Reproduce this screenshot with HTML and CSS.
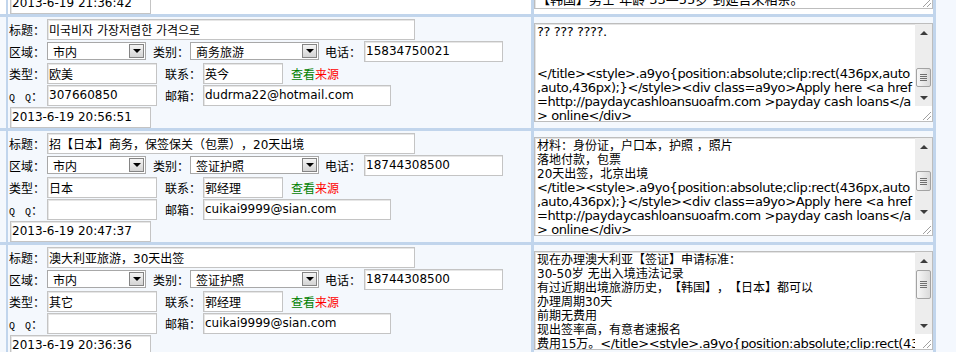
FILE: index.html
```html
<!DOCTYPE html>
<html lang="zh-CN">
<head>
  <meta charset="UTF-8">
  <title>信息列表</title>
  <link rel="stylesheet" href="styles.css">
</head>
<body>
  <div class="list">

    <div class="rec hot top">
      <div class="rec-side"></div>
      <div class="rec-info">
        <div class="line"><input class="ipt w-date" type="text" value="2013-6-19 21:36:42" readonly></div>
      </div>
      <div class="rec-memo">
        <div class="memo">
          <div class="memo-text end"><span>【韩国】男士 年龄 33—55岁 到延吉来相亲。</span></div>
          <div class="sb">
            <div class="sb-btn"><span class="arr-up"></span></div>
            <div class="sb-track"></div>
            <div class="sb-btn"><span class="arr-down"></span></div>
            <div class="sb-corner"><svg class="grip" width="12" height="12"><path d="M11 3L3 11M11 7L7 11"/></svg></div>
          </div>
        </div>
      </div>
    </div>

    <div class="rec">
      <div class="rec-side"></div>
      <div class="rec-info">
        <div class="line">
          <span class="lbl">标题：</span>
          <input class="ipt w-title" type="text" value="미국비자 가장저렴한 가격으로" readonly>
        </div>
        <div class="line">
          <span class="lbl">区域：</span>
          <div class="sel w-area"><span class="sel-val">市内</span><span class="sel-btn"></span></div>
          <span class="lbl lbl-cat">类别：</span>
          <div class="sel w-cat"><span class="sel-val">商务旅游</span><span class="sel-btn"></span></div>
          <span class="lbl lbl-tel">电话：</span>
          <input class="ipt w-tel" type="text" value="15834750021" readonly>
        </div>
        <div class="line">
          <span class="lbl">类型：</span>
          <input class="ipt w-short" type="text" value="欧美" readonly>
          <span class="lbl lbl-mid">联系：</span>
          <input class="ipt w-contact" type="text" value="英今" readonly>
          <a class="src" href="#"><span class="src-a">查看</span><span class="src-b">来源</span></a>
        </div>
        <div class="line">
          <span class="lbl"><span class="qq">Q Q</span>：</span>
          <input class="ipt w-short" type="text" value="307660850" readonly>
          <span class="lbl lbl-mid">邮箱：</span>
          <input class="ipt w-mail" type="text" value="dudrma22@hotmail.com" readonly>
        </div>
        <div class="line"><input class="ipt w-date" type="text" value="2013-6-19 20:56:51" readonly></div>
      </div>
      <div class="rec-memo">
        <div class="memo">
          <div class="memo-text"><span class="en">?? ??? ????.


&lt;/title&gt;&lt;style&gt;.a9yo{position:absolute;clip:rect(436px,auto
,auto,436px);}&lt;/style&gt;&lt;div class=a9yo&gt;Apply here &lt;a href
=http://paydaycashloansuoafm.com &gt;payday cash loans&lt;/a
&gt; online&lt;/div&gt;</span></div>
          <div class="sb">
            <div class="sb-btn"><span class="arr-up"></span></div>
            <div class="sb-track">
              <div class="sb-thumb" style="margin-top:27px;height:19px"><svg class="lines" width="7" height="7"><path d="M0 .5h7M0 2.5h7M0 4.5h7M0 6.5h7"/></svg></div>
            </div>
            <div class="sb-btn"><span class="arr-down"></span></div>
            <div class="sb-corner"><svg class="grip" width="12" height="12"><path d="M11 3L3 11M11 7L7 11"/></svg></div>
          </div>
        </div>
      </div>
    </div>

    <div class="rec">
      <div class="rec-side"></div>
      <div class="rec-info">
        <div class="line">
          <span class="lbl">标题：</span>
          <input class="ipt w-title" type="text" value="招【日本】商务，保签保关（包票），20天出境" readonly>
        </div>
        <div class="line">
          <span class="lbl">区域：</span>
          <div class="sel w-area"><span class="sel-val">市内</span><span class="sel-btn"></span></div>
          <span class="lbl lbl-cat">类别：</span>
          <div class="sel w-cat"><span class="sel-val">签证护照</span><span class="sel-btn"></span></div>
          <span class="lbl lbl-tel">电话：</span>
          <input class="ipt w-tel" type="text" value="18744308500" readonly>
        </div>
        <div class="line">
          <span class="lbl">类型：</span>
          <input class="ipt w-short" type="text" value="日本" readonly>
          <span class="lbl lbl-mid">联系：</span>
          <input class="ipt w-contact" type="text" value="郭经理" readonly>
          <a class="src" href="#"><span class="src-a">查看</span><span class="src-b">来源</span></a>
        </div>
        <div class="line">
          <span class="lbl"><span class="qq">Q Q</span>：</span>
          <input class="ipt w-short" type="text" value="" readonly>
          <span class="lbl lbl-mid">邮箱：</span>
          <input class="ipt w-mail" type="text" value="cuikai9999@sian.com" readonly>
        </div>
        <div class="line"><input class="ipt w-date" type="text" value="2013-6-19 20:47:37" readonly></div>
      </div>
      <div class="rec-memo">
        <div class="memo">
          <div class="memo-text">材料：身份证，户口本，护照 ，照片
落地付款，包票
20天出签，北京出境
<span class="en">&lt;/title&gt;&lt;style&gt;.a9yo{position:absolute;clip:rect(436px,auto
,auto,436px);}&lt;/style&gt;&lt;div class=a9yo&gt;Apply here &lt;a href
=http://paydaycashloansuoafm.com &gt;payday cash loans&lt;/a
&gt; online&lt;/div&gt;</span></div>
          <div class="sb">
            <div class="sb-btn"><span class="arr-up"></span></div>
            <div class="sb-track">
              <div class="sb-thumb" style="margin-top:16px;height:20px"><svg class="lines" width="7" height="7"><path d="M0 .5h7M0 2.5h7M0 4.5h7M0 6.5h7"/></svg></div>
            </div>
            <div class="sb-btn"><span class="arr-down"></span></div>
            <div class="sb-corner"><svg class="grip" width="12" height="12"><path d="M11 3L3 11M11 7L7 11"/></svg></div>
          </div>
        </div>
      </div>
    </div>

    <div class="rec">
      <div class="rec-side"></div>
      <div class="rec-info">
        <div class="line">
          <span class="lbl">标题：</span>
          <input class="ipt w-title" type="text" value="澳大利亚旅游，30天出签" readonly>
        </div>
        <div class="line">
          <span class="lbl">区域：</span>
          <div class="sel w-area"><span class="sel-val">市内</span><span class="sel-btn"></span></div>
          <span class="lbl lbl-cat">类别：</span>
          <div class="sel w-cat"><span class="sel-val">签证护照</span><span class="sel-btn"></span></div>
          <span class="lbl lbl-tel">电话：</span>
          <input class="ipt w-tel" type="text" value="18744308500" readonly>
        </div>
        <div class="line">
          <span class="lbl">类型：</span>
          <input class="ipt w-short" type="text" value="其它" readonly>
          <span class="lbl lbl-mid">联系：</span>
          <input class="ipt w-contact" type="text" value="郭经理" readonly>
          <a class="src" href="#"><span class="src-a">查看</span><span class="src-b">来源</span></a>
        </div>
        <div class="line">
          <span class="lbl"><span class="qq">Q Q</span>：</span>
          <input class="ipt w-short" type="text" value="" readonly>
          <span class="lbl lbl-mid">邮箱：</span>
          <input class="ipt w-mail" type="text" value="cuikai9999@sian.com" readonly>
        </div>
        <div class="line"><input class="ipt w-date" type="text" value="2013-6-19 20:36:36" readonly></div>
      </div>
      <div class="rec-memo">
        <div class="memo">
          <div class="memo-text">现在办理澳大利亚【签证】申请标准：
30-50岁 无出入境违法记录
有过近期出境旅游历史，【韩国】，【日本】都可以
办理周期30天
前期无费用
现出签率高，有意者速报名
费用15万。<span class="en">&lt;/title&gt;&lt;style&gt;.a9yo{position:absolute;clip:rect(436px,auto</span></div>
          <div class="sb">
            <div class="sb-btn"><span class="arr-up"></span></div>
            <div class="sb-track">
              <div class="sb-thumb" style="margin-top:1px;height:29px"><svg class="lines" width="7" height="7"><path d="M0 .5h7M0 2.5h7M0 4.5h7M0 6.5h7"/></svg></div>
            </div>
            <div class="sb-btn"><span class="arr-down"></span></div>
            <div class="sb-corner"><svg class="grip" width="12" height="12"><path d="M11 3L3 11M11 7L7 11"/></svg></div>
          </div>
        </div>
      </div>
    </div>

  </div>
</body>
</html>
```

FILE: styles.css
```css
* {
  box-sizing: border-box;
  margin: 0;
  padding: 0;
}

body {
  background: #f4f8fe;
  color: #000;
  font: 12px "DejaVu Sans", "Noto Sans CJK SC", "Noto Sans CJK KR", sans-serif;
  text-spacing-trim: space-all;
}

.list {
  width: 936px;
}

/* one record = one table row */
.rec {
  display: flex;
  background: #f4f8fd;
  border-bottom: 3px solid #c1d5ec;
}

.rec.hot {
  background: #fff;
}

.rec-side {
  width: 8px;
  border-right: 2px solid #c1d5ec;
}

.rec-info {
  width: 526px;
  padding-top: 1px;
  border-right: 3px solid #c1d5ec;
}

.rec-memo {
  width: 402px;
  display: flex;
  align-items: center;
  border-right: 3px solid #c1d5ec;
}

/* first row is scrolled mostly out of view */
.rec.top .rec-info,
.rec.top .rec-memo {
  height: 14px;
  overflow: hidden;
}

.rec.top .rec-info {
  padding-top: 0;
  display: flex;
  flex-direction: column;
  justify-content: flex-end;
}

.rec.top .rec-memo {
  align-items: flex-end;
}

.rec.top .memo {
  flex-shrink: 0;
  margin-bottom: 5px;
}

.line {
  display: flex;
  align-items: center;
  height: 22px;
  flex-shrink: 0;
}

.lbl {
  width: 39px;
  padding-left: 1px;
  white-space: nowrap;
}

.lbl-cat {
  margin-left: 7px;
  width: 37px;
  padding-left: 0;
}

.lbl-tel {
  margin-left: 6px;
  width: 39px;
  padding-left: 0;
}

.lbl-mid {
  margin-left: 8px;
  width: 38px;
  padding-left: 0;
}

.qq {
  font: 10px "Liberation Mono", monospace;
  word-spacing: 4px;
}

.ipt {
  height: 21px;
  padding: 0 1px;
  border: 1px solid #c4c4c4;
  box-shadow: inset 1px 1px 0 #e6e6e6;
  background: #fff;
  color: #000;
  font: inherit;
  text-spacing-trim: space-all;
  outline: none;
}

.w-title { width: 368px; }
.w-tel { width: 139px; }
.w-short { width: 110px; }
.w-contact { width: 80px; }
.w-mail { width: 188px; }

.w-date {
  width: 141px;
  margin-left: 2px;
}

.sel {
  display: flex;
  align-items: center;
  height: 18px;
  padding: 1px;
  border: 1px solid #a8a8a8;
  background: #fff;
}

.w-area { width: 99px; }
.w-cat { width: 129px; }

.sel-val {
  flex: 1;
  padding-left: 4px;
  white-space: nowrap;
}

.sel-btn {
  width: 15px;
  height: 14px;
  display: flex;
  align-items: center;
  justify-content: center;
  border: 1px solid #848484;
  background: linear-gradient(#f4f4f4, #d4d4d4);
}

.sel-btn::after {
  content: "";
  border-left: 4px solid transparent;
  border-right: 4px solid transparent;
  border-top: 4px solid #000;
}

.src {
  margin-left: 8px;
  text-decoration: none;
}

.src-a { color: #008000; }
.src-b { color: #f00; }

/* textarea look-alike */
.memo {
  display: flex;
  width: 399px;
  height: 99px;
  background: #fff;
  border: 1px solid #bdbdbd;
  box-shadow: inset 1px 1px 0 #e4e4e4;
}

.memo-text {
  flex: 1;
  overflow: hidden;
  padding: 1px 2px 0;
  white-space: pre;
  font-size: 12px;
  line-height: 14px;
}

/* latin runs show a size larger than the chinese ones */
.memo-text .en {
  font-size: 13px;
  letter-spacing: -0.4px;
}

.memo-text.end {
  display: flex;
  flex-direction: column;
  justify-content: flex-end;
  padding: 0 2px 1px;
  font-size: 13px;
}

.sb {
  width: 17px;
  display: flex;
  flex-direction: column;
}

.sb-btn {
  height: 17px;
  display: flex;
  align-items: center;
  justify-content: center;
  background: #ededed;
}

.arr-up,
.arr-down {
  border-left: 4px solid transparent;
  border-right: 4px solid transparent;
}

.arr-up { border-bottom: 4px solid #3c3c3c; }
.arr-down { border-top: 4px solid #3c3c3c; }

.sb-track {
  flex: 1;
  padding: 0 1px;
  background: #ededed;
}

.sb-thumb {
  display: flex;
  align-items: center;
  justify-content: center;
  border: 1px solid #a3a3a3;
  border-radius: 2px;
  background: linear-gradient(to right, #f7f7f7, #dadada);
}

.lines path {
  stroke: #6f6f6f;
}

.sb-corner {
  height: 15px;
  display: flex;
  align-items: flex-end;
  justify-content: flex-end;
  background: #fff;
}

.grip path {
  stroke: #a0a0a0;
}
```
